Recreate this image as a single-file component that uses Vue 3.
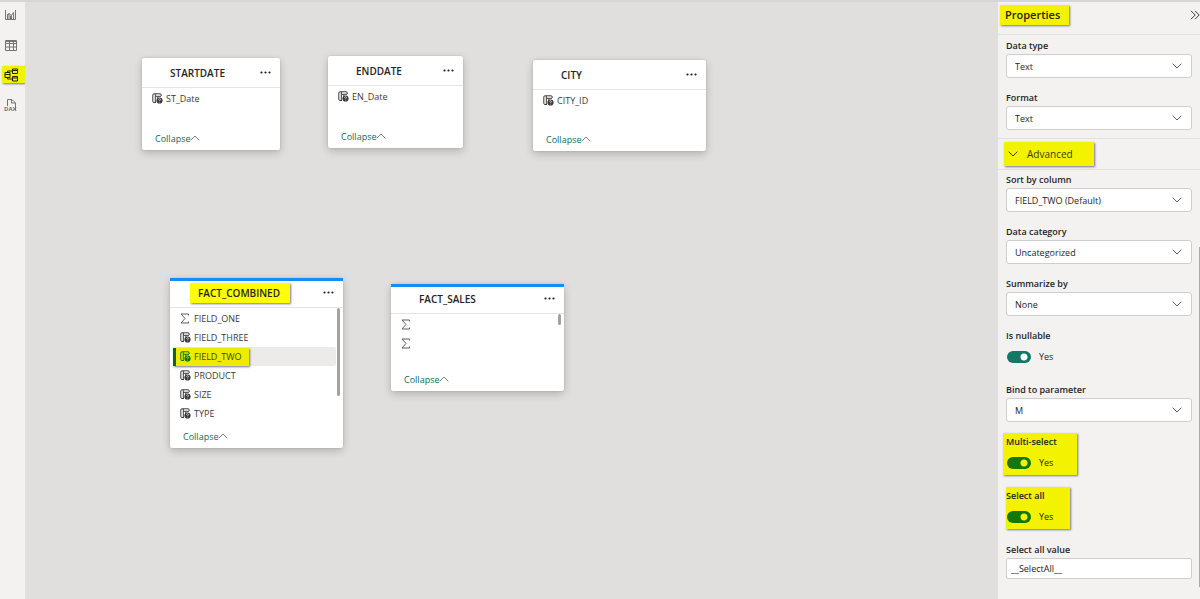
<script setup>
import { ref } from 'vue'

const tables = [
  { name: 'STARTDATE', x: 117, y: 56, w: 138, body: 38, fields: [{ name: 'ST_Date' }] },
  { name: 'ENDDATE', x: 303, y: 54, w: 135, body: 38, fields: [{ name: 'EN_Date' }] },
  { name: 'CITY', x: 508, y: 58, w: 173, body: 37, fields: [{ name: 'CITY_ID' }] },
  {
    name: 'FACT_COMBINED', x: 145, y: 276, w: 173, body: 116, fact: true, marked: true, thumb: 88,
    fields: [
      { name: 'FIELD_ONE', sum: true },
      { name: 'FIELD_THREE' },
      { name: 'FIELD_TWO', selected: true },
      { name: 'PRODUCT' },
      { name: 'SIZE' },
      { name: 'TYPE' }
    ]
  },
  {
    name: 'FACT_SALES', x: 366, y: 282, w: 173, body: 53, fact: true, thumb: 11,
    fields: [{ name: '', sum: true }, { name: '', sum: true }]
  }
]

const general = [
  { id: 'data-type', label: 'Data type', value: 'Text' },
  { id: 'format', label: 'Format', value: 'Text' }
]
const advanced = [
  { id: 'sort-by', label: 'Sort by column', value: 'FIELD_TWO (Default)' },
  { id: 'category', label: 'Data category', value: 'Uncategorized' },
  { id: 'summarize', label: 'Summarize by', value: 'None' },
  { id: 'nullable', label: 'Is nullable', toggle: true },
  { id: 'bind', label: 'Bind to parameter', value: 'M' },
  { id: 'multi', label: 'Multi-select', toggle: true, mark: 'mark-wide' },
  { id: 'all', label: 'Select all', toggle: true, mark: 'mark-narrow' }
]
const switches = ref({ nullable: true, multi: true, all: true })
const selectAllValue = ref('__SelectAll__')
</script>

<template>
  <div class="app">
    <nav class="rail">
      <button class="view" aria-label="Report view">
        <svg width="13" height="12" viewBox="0 0 13 12" fill="none" stroke="#767472"><path d="M1.500 1v9.500h10V1M3.500 10V5.500h1.500V10M6.500 10V7h1V10M9.500 10V3.500M3.500 5.500 5 4.500l2.500 2 2-3" /></svg>
      </button>
      <button class="view" aria-label="Table view">
        <svg width="13" height="12" viewBox="0 0 13 12" fill="none" stroke="#767472"><path d="M1.500 1.500h11v10h-11zM1.500 4.500h11M1.500 8h11M5.500 1.500v10M9.500 1.500v10M1.500 2.500h11" /></svg>
      </button>
      <button class="view active" aria-label="Model view">
        <svg width="15" height="14" viewBox="0 0 15 14" fill="none" stroke="#24240a"><path d="M8.500 1h5v4.500h-5zM8.500 8.500h5V13h-5zM8.500 2.500h5M8.500 10h5M1 4.500h5v5H1zM1 6.500h5M3.500 4.500V3h5M3.500 9.500V11h5" /></svg>
      </button>
      <button class="view" aria-label="DAX query view">
        <svg width="15" height="14" viewBox="0 0 15 14" fill="none" stroke="#767472"><path d="M3.500 8V1.500h4.500L11.500 5v7.500M7.500 1.500V5h4" /><text x="0" y="13" font-size="6" font-weight="700" fill="#767472" stroke="none">DAX</text></svg>
      </button>
    </nav>

    <main class="canvas">
      <section
        v-for="t in tables" :key="t.name" class="card"
        :style="{ left: t.x + 'px', top: t.y + 'px', width: t.w + 'px' }"
      >
        <header class="card-head" :class="{ fact: t.fact }">
          <h2 :class="{ marked: t.marked }">{{ t.name }}</h2>
          <button class="more" :aria-label="'More options for ' + t.name">
            <svg width="11" height="3" viewBox="0 0 11 3" fill="#201f1e"><circle cx="1.500" cy="1.500" r="1.100" /><circle cx="5.500" cy="1.500" r="1.100" /><circle cx="9.500" cy="1.500" r="1.100" /></svg>
          </button>
        </header>
        <ul class="rows" :style="{ height: t.body + 'px' }">
          <li v-for="(f, i) in t.fields" :key="i" :class="{ selected: f.selected }">
            <span class="row-in">
              <svg v-if="f.sum" class="ico" width="11" height="11" viewBox="0 0 11 11" fill="none" stroke="#605e5c"><path d="M8.500 2.500v-1.500H1L5 5.500 1 10h7.500V8.500" /></svg>
              <svg v-else class="ico" width="11" height="11" viewBox="0 0 11 11" fill="none" stroke="currentColor">
                <path d="M4 9.500H2A1.200 1.200 0 0 1 .8 8.300V2A1.200 1.200 0 0 1 2 .8h6A1.200 1.200 0 0 1 9.200 2v1M3.300 1v8.500M3.300 3.300H9M5.800 3.500v2" />
                <circle cx="7.500" cy="7.500" r="3.100" fill="currentColor" stroke="none" />
                <path d="M6.500 6.700c0-1.300 2-1.300 2 0 0 .6-1 .6-1 1.300M7.500 8.700v.7" class="query" stroke-width=".7" />
              </svg>
              <span>{{ f.name }}</span>
            </span>
          </li>
        </ul>
        <span v-if="t.thumb" class="thumb" :style="{ height: t.thumb + 'px' }"></span>
        <button class="collapse">
          Collapse
          <svg width="10" height="6" viewBox="0 0 10 6" fill="none" stroke="#605e5c" stroke-width=".8"><path d="M.7 5.300 5 1l4.300 4.300" /></svg>
        </button>
      </section>
    </main>

    <aside class="panel">
      <header class="panel-head">
        <h1>Properties</h1>
        <button class="hide" aria-label="Collapse pane">
          <svg width="10" height="10" viewBox="0 0 10 10" fill="none" stroke="#3b3a39"><path d="M1 .8 5.200 5 1 9.200M5 .8 9.200 5 5 9.200" /></svg>
        </button>
      </header>

      <div class="group">
        <div v-for="f in general" :key="f.id" class="field">
          <label :for="f.id">{{ f.label }}</label>
          <div class="pick">
            <select :id="f.id"><option>{{ f.value }}</option></select>
            <svg width="10" height="6" viewBox="0 0 10 6" fill="none" stroke="#605e5c"><path d="M.7.700 5 5 9.300.7" /></svg>
          </div>
        </div>
      </div>

      <div class="section">
        <button class="section-toggle" aria-expanded="true">
          <svg width="10" height="6" viewBox="0 0 10 6" fill="none" stroke="#3a3a08"><path d="M.7.700 5 5 9.300.7" /></svg>
          Advanced
        </button>
      </div>

      <div class="group advanced">
        <template v-for="f in advanced" :key="f.id">
          <div v-if="f.toggle" class="field toggle" :class="f.mark">
            <label :for="f.id">{{ f.label }}</label>
            <div class="switch">
              <input :id="f.id" v-model="switches[f.id]" type="checkbox" role="switch">
              <span>{{ switches[f.id] ? 'Yes' : 'No' }}</span>
            </div>
          </div>
          <div v-else class="field">
            <label :for="f.id">{{ f.label }}</label>
            <div class="pick">
              <select :id="f.id"><option>{{ f.value }}</option></select>
              <svg width="10" height="6" viewBox="0 0 10 6" fill="none" stroke="#605e5c"><path d="M.7.700 5 5 9.300.7" /></svg>
            </div>
          </div>
        </template>
        <div class="field">
          <label for="all-value">Select all value</label>
          <input id="all-value" v-model="selectAllValue" class="text" type="text">
        </div>
      </div>
      <span class="pane-thumb"></span>
    </aside>
  </div>
</template>

<style>
body { background: #e1dfdd; }
</style>

<style scoped>
.app {
  display: grid;
  grid-template-columns: 25px 1fr 202px;
  min-height: 100vh;
  box-sizing: border-box;
  border-top: 2px solid #d8d6d5;
  font-family: "Open Sans", "Noto Sans", sans-serif;
  font-size: 9px;
  color: #252423;
}
button, input, select { font: inherit; color: inherit; margin: 0; padding: 0; border: 0; background: none; }
button { cursor: pointer; }
svg { display: block; flex: none; }
h1, h2, ul { margin: 0; padding: 0; }

.rail { background: #f3f2f1; display: flex; flex-direction: column; gap: 13px; padding-top: 4px; }
.view { height: 17px; display: flex; align-items: center; padding-left: 4px; }
.view.active { background: #f3f200; margin-left: 2px; padding-left: 2px; box-shadow: 1px 1px 2px #77739a; }

.canvas { position: relative; background: #e1dfdd; }
.card { position: absolute; background: #fff; border-radius: 2px; box-shadow: 0 3px 9px rgba(0, 0, 0, .2), 0 0 2px rgba(0, 0, 0, .15); }
.card-head {
  height: 30px; padding: 0 9px 0 20px; display: flex; align-items: center; justify-content: space-between;
  box-sizing: border-box; border-bottom: 1px solid #e5e4e3;
}
.card-head.fact { box-shadow: inset 0 3px #118dff; }
h2 { font-size: 10px; line-height: 20px; font-weight: 600; color: #252423; padding: 0 8px; }
h2.marked { background: #ff0; box-shadow: 1px 1px 2px #77739a; padding: 0 10px 0 8px; }
.rows { list-style: none; padding: 1px 7px 0 3px; box-sizing: border-box; overflow: hidden; }
li { height: 19px; display: flex; align-items: center; border-radius: 2px; color: #3b3a39; }
.row-in { display: flex; align-items: center; gap: 3px; height: 18px; padding: 0 7px; }
.query { stroke: #fff; }
li.selected { background: #edebe9; }
.selected .row-in { background: #edeb00; border-left: 3px solid #0b6a0b; padding-left: 4px; color: #3b4a00; box-shadow: 1px 1px 2px #77739a; }
.selected .ico { color: #176f00; }
.selected .query { stroke: #ff0; }
.thumb { position: absolute; right: 3px; top: 30px; width: 3px; border-radius: 2px; background: #a3a2a1; }
.collapse { height: 24px; padding-left: 13px; display: flex; align-items: center; color: #0f6b5c; }

.panel { position: relative; background: #f3f2f1; }
.panel-head { height: 33px; box-sizing: border-box; border-bottom: 1px solid #e3e1df; padding: 3px 0 0 2px; display: flex; align-items: flex-start; justify-content: space-between; }
h1 { font-size: 11px; line-height: 20px; font-weight: 600; background: #f3f200; padding: 0 9px 0 5px; color: #252400; box-shadow: 1px 1px 2px #77739a; }
.hide { padding: 5px 0 4px; }
.group { padding: 2px 8px 8px; display: flex; flex-direction: column; gap: 11px; }
.group.advanced { padding-top: 1px; }
.field > label { display: block; line-height: 17px; font-weight: 600; }
.pick { position: relative; }
.pick select { appearance: none; display: block; width: 100%; height: 24px; padding: 0 24px 0 8px; border: 1px solid #d0cecc; border-radius: 3px; background: #fff; box-sizing: border-box; }
.pick svg { position: absolute; right: 10px; top: 9px; pointer-events: none; }
.section { border: 1px solid #e3e1df; border-width: 1px 0; padding: 3px 6px; }
.section-toggle { height: 24px; width: 90px; display: flex; align-items: center; gap: 9px; padding-left: 4px; background: #f3f200; font-size: 10px; color: #3a3a08; box-shadow: 1px 1px 2px #77739a; }
.toggle { margin-bottom: 1px; }
.switch { display: flex; align-items: center; gap: 8px; height: 25px; padding-left: 1px; }
.switch input { appearance: none; width: 24px; height: 12px; border-radius: 6px; background: radial-gradient(circle at 17px 6px, #fff 3px, #117865 4px); }
.mark-wide, .mark-narrow { background: #f3f200; box-shadow: 1px 1px 2px #77739a; }
.mark-wide { width: 71px; margin-left: -3px; padding-left: 3px; }
.mark-narrow { width: 64px; }
.mark-wide input, .mark-narrow input { background: radial-gradient(circle at 17px 6px, #f3f200 3px, #117800 4px); }
.text { display: block; width: 100%; height: 21px; box-sizing: border-box; border: 1px solid #d0cecc; border-radius: 2px; background: #fff; padding: 0 4px; }
.pane-thumb { position: absolute; right: 0; top: 245px; height: 340px; width: 1px; background: #aaa9a8; }
</style>
